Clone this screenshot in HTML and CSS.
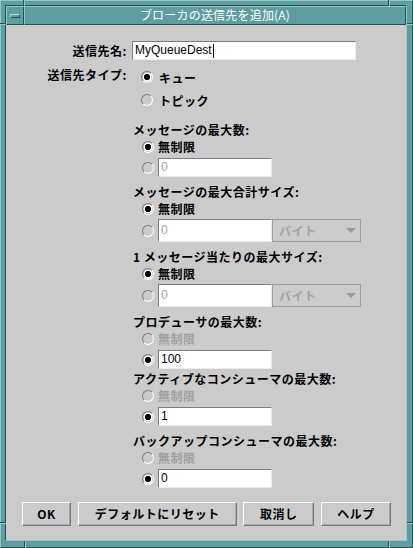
FILE: index.html
```html
<!DOCTYPE html>
<html lang="ja">
<head>
<meta charset="utf-8">
<title>ブローカの送信先を追加(A)</title>
<link rel="stylesheet" href="styles.css">
</head>
<body>
<div class="window">
  <span class="notch notch-v n-tl"></span>
  <span class="notch notch-v n-tr"></span>
  <span class="notch notch-v n-bl"></span>
  <span class="notch notch-v n-br"></span>
  <span class="notch notch-h n-lt"></span>
  <span class="notch notch-h n-lb"></span>
  <span class="notch notch-h n-rt"></span>
  <span class="notch notch-h n-rb"></span>
  <div class="inner">
    <div class="titlebar">
      <div class="menu-btn"><span class="menu-bar"></span></div>
      <div class="title">ブローカの送信先を追加(A)</div>
    </div>
    <div class="content">
      <div class="form-top">
        <div class="label">送信先名:</div>
        <div class="field field-name"><span>MyQueueDest</span><span class="caret"></span></div>
        <div class="label label-type">送信先タイプ:</div>
        <div class="radio-group">
          <div class="opt"><span class="radio on"></span><span>キュー</span></div>
          <div class="opt"><span class="radio"></span><span>トピック</span></div>
        </div>
      </div>

      <div class="sections">
        <div class="section">
          <div class="heading">メッセージの最大数:</div>
          <div class="opt"><span class="radio on"></span><span>無制限</span></div>
          <div class="input-row"><span class="radio"></span><div class="field num disabled">0</div></div>
        </div>

        <div class="section">
          <div class="heading">メッセージの最大合計サイズ:</div>
          <div class="opt"><span class="radio on"></span><span>無制限</span></div>
          <div class="input-row combo">
            <span class="radio"></span>
            <div class="combo-box">
              <div class="field num disabled">0</div>
              <div class="select"><span>バイト</span><svg width="10" height="5" viewBox="0 0 10 5"><polygon points="0,0 10,0 5,5" fill="#9a9a9a"/></svg></div>
            </div>
          </div>
        </div>

        <div class="section">
          <div class="heading">1 メッセージ当たりの最大サイズ:</div>
          <div class="opt"><span class="radio on"></span><span>無制限</span></div>
          <div class="input-row combo">
            <span class="radio"></span>
            <div class="combo-box">
              <div class="field num disabled">0</div>
              <div class="select"><span>バイト</span><svg width="10" height="5" viewBox="0 0 10 5"><polygon points="0,0 10,0 5,5" fill="#9a9a9a"/></svg></div>
            </div>
          </div>
        </div>

        <div class="section">
          <div class="heading">プロデューサの最大数:</div>
          <div class="opt off"><span class="radio"></span><span>無制限</span></div>
          <div class="input-row"><span class="radio on"></span><div class="field num">100</div></div>
        </div>

        <div class="section tight">
          <div class="heading">アクティブなコンシューマの最大数:</div>
          <div class="opt off"><span class="radio"></span><span>無制限</span></div>
          <div class="input-row"><span class="radio on"></span><div class="field num">1</div></div>
        </div>

        <div class="section">
          <div class="heading">バックアップコンシューマの最大数:</div>
          <div class="opt off"><span class="radio"></span><span>無制限</span></div>
          <div class="input-row"><span class="radio on"></span><div class="field num">0</div></div>
        </div>
      </div>

      <div class="buttons">
        <div class="btn">OK</div>
        <div class="btn">デフォルトにリセット</div>
        <div class="btn">取消し</div>
        <div class="btn">ヘルプ</div>
      </div>
    </div>
  </div>
</div>
</body>
</html>
```

FILE: styles.css
```css
html, body {
  margin: 0;
  padding: 0;
  background: #5f9ea0;
}

.window {
  position: relative;
  width: 413px;
  height: 548px;
  box-sizing: border-box;
  background: #5f9ea0;
  border: 1px solid;
  border-color: #93c6c6 #2b5051 #2b5051 #93c6c6;
  padding: 4px 5px 6px 4px;
  display: flex;
  flex-direction: column;
  font-family: "Noto Sans CJK JP", "Noto Sans", sans-serif;
  color: #000;
}

/* frame resize-corner marks */
.notch {
  position: absolute;
  box-sizing: border-box;
}
.notch-v {
  width: 2px;
  border-left: 1px solid #2b5051;
  border-right: 1px solid #93c6c6;
}
.notch-h {
  height: 2px;
  border-top: 1px solid #2b5051;
  border-bottom: 1px solid #93c6c6;
}
.n-tl { left: 22px; top: -1px; height: 6px; }
.n-tr { left: 387px; top: -1px; height: 6px; }
.n-bl { left: 23px; bottom: -1px; height: 7px; }
.n-br { left: 387px; bottom: -1px; height: 7px; }
.n-lt { left: -1px; top: 22px; width: 6px; }
.n-lb { left: -1px; top: 521px; width: 6px; }
.n-rt { right: -1px; top: 22px; width: 6px; }
.n-rb { right: -1px; top: 521px; width: 6px; }

.inner {
  flex: 1;
  min-height: 0;
  display: flex;
  flex-direction: column;
  border: 1px solid;
  border-color: #2b5051 #93c6c6 #93c6c6 #2b5051;
}

.titlebar {
  display: flex;
  height: 19px;
  flex: none;
}

.menu-btn {
  width: 18px;
  box-sizing: border-box;
  border: 1px solid;
  border-color: #93c6c6 #2b5051 #2b5051 #93c6c6;
  display: flex;
  align-items: center;
  justify-content: center;
}

.menu-bar {
  width: 10px;
  height: 4px;
  box-sizing: border-box;
  border: 1px solid;
  border-color: #b4dcdc #2b5051 #2b5051 #b4dcdc;
}

.title {
  flex: 1;
  box-sizing: border-box;
  border: 1px solid;
  border-color: #93c6c6 #2b5051 #2b5051 #93c6c6;
  color: #fff;
  font-size: 12px;
  line-height: 16px;
  text-align: center;
  letter-spacing: 0.2px;
}

.content {
  flex: 1;
  background: #cbcbcb;
  display: flex;
  flex-direction: column;
  padding: 16px 15px 14px 0;
  font-size: 12px;
}

.form-top {
  display: grid;
  grid-template-columns: 121px 224px;
  column-gap: 5px;
  row-gap: 8px;
}

.label {
  text-align: right;
  font-weight: bold;
  letter-spacing: 0.5px;
  line-height: 14px;
  align-self: center;
}

.label-type {
  align-self: start;
}

.field {
  height: 19px;
  box-sizing: border-box;
  background: #fff;
  border: 1px solid;
  border-color: #7d7d7d #ececec #ececec #7d7d7d;
  font-family: "Liberation Sans", Arial, sans-serif;
  font-size: 12px;
  line-height: 17px;
  padding-left: 2px;
  display: flex;
  align-items: center;
}

.field-name {
  width: 224px;
}

.caret {
  width: 1px;
  height: 14px;
  background: #000;
  margin-left: 1px;
}

.field.disabled {
  color: #a3a3a3;
}

.radio-group {
  display: flex;
  flex-direction: column;
  gap: 5px;
  padding-left: 9px;
}

.opt {
  display: flex;
  align-items: center;
  gap: 6px;
  height: 18px;
  font-weight: bold;
  letter-spacing: 0.5px;
}

.opt.off {
  color: #a0a0a0;
}

.radio {
  flex: none;
  width: 12px;
  height: 12px;
  box-sizing: border-box;
  border-radius: 50%;
  border: 1px solid;
  border-color: #7a7a7a #ffffff #ffffff #7a7a7a;
}

.radio.on {
  background: radial-gradient(circle at center, #000 0, #000 2.8px, #fff 3.3px, #fff 4.1px, rgba(255,255,255,0) 4.6px);
}

.sections {
  margin: 12px 0 0 127px;
  display: flex;
  flex-direction: column;
}

.section + .section {
  margin-top: 6px;
}

.section.tight {
  margin-top: 1px;
}

.heading {
  font-weight: bold;
  line-height: 17px;
  letter-spacing: 0.5px;
  white-space: nowrap;
}

.section .opt {
  height: 17px;
  padding-left: 9px;
  gap: 4px;
}

.input-row {
  display: flex;
  align-items: center;
  gap: 4px;
  padding-left: 9px;
  margin-top: 3px;
}

.input-row.combo {
  margin-top: 2px;
}

.field.num {
  width: 114px;
}

.combo-box {
  display: flex;
}

.combo-box .field {
  height: 23px;
}

.select {
  width: 89px;
  height: 23px;
  box-sizing: border-box;
  border: 1px solid #9c9c9c;
  display: flex;
  align-items: center;
  justify-content: space-between;
  padding: 0 4px 0 6px;
  color: #a3a3a3;
  font-weight: bold;
  letter-spacing: 0.5px;
}

.buttons {
  margin-top: auto;
  display: grid;
  grid-template-columns: 49px 159px 71px 70px;
  justify-content: space-between;
  padding-left: 16px;
}

.btn {
  height: 24px;
  box-sizing: border-box;
  border: 1px solid;
  border-color: #ffffff #777777 #777777 #ffffff;
  box-shadow: inset -1px -1px 0 #a9a9a9;
  display: flex;
  align-items: center;
  justify-content: center;
  font-weight: bold;
  letter-spacing: 0.5px;
  line-height: 14px;
}
```
